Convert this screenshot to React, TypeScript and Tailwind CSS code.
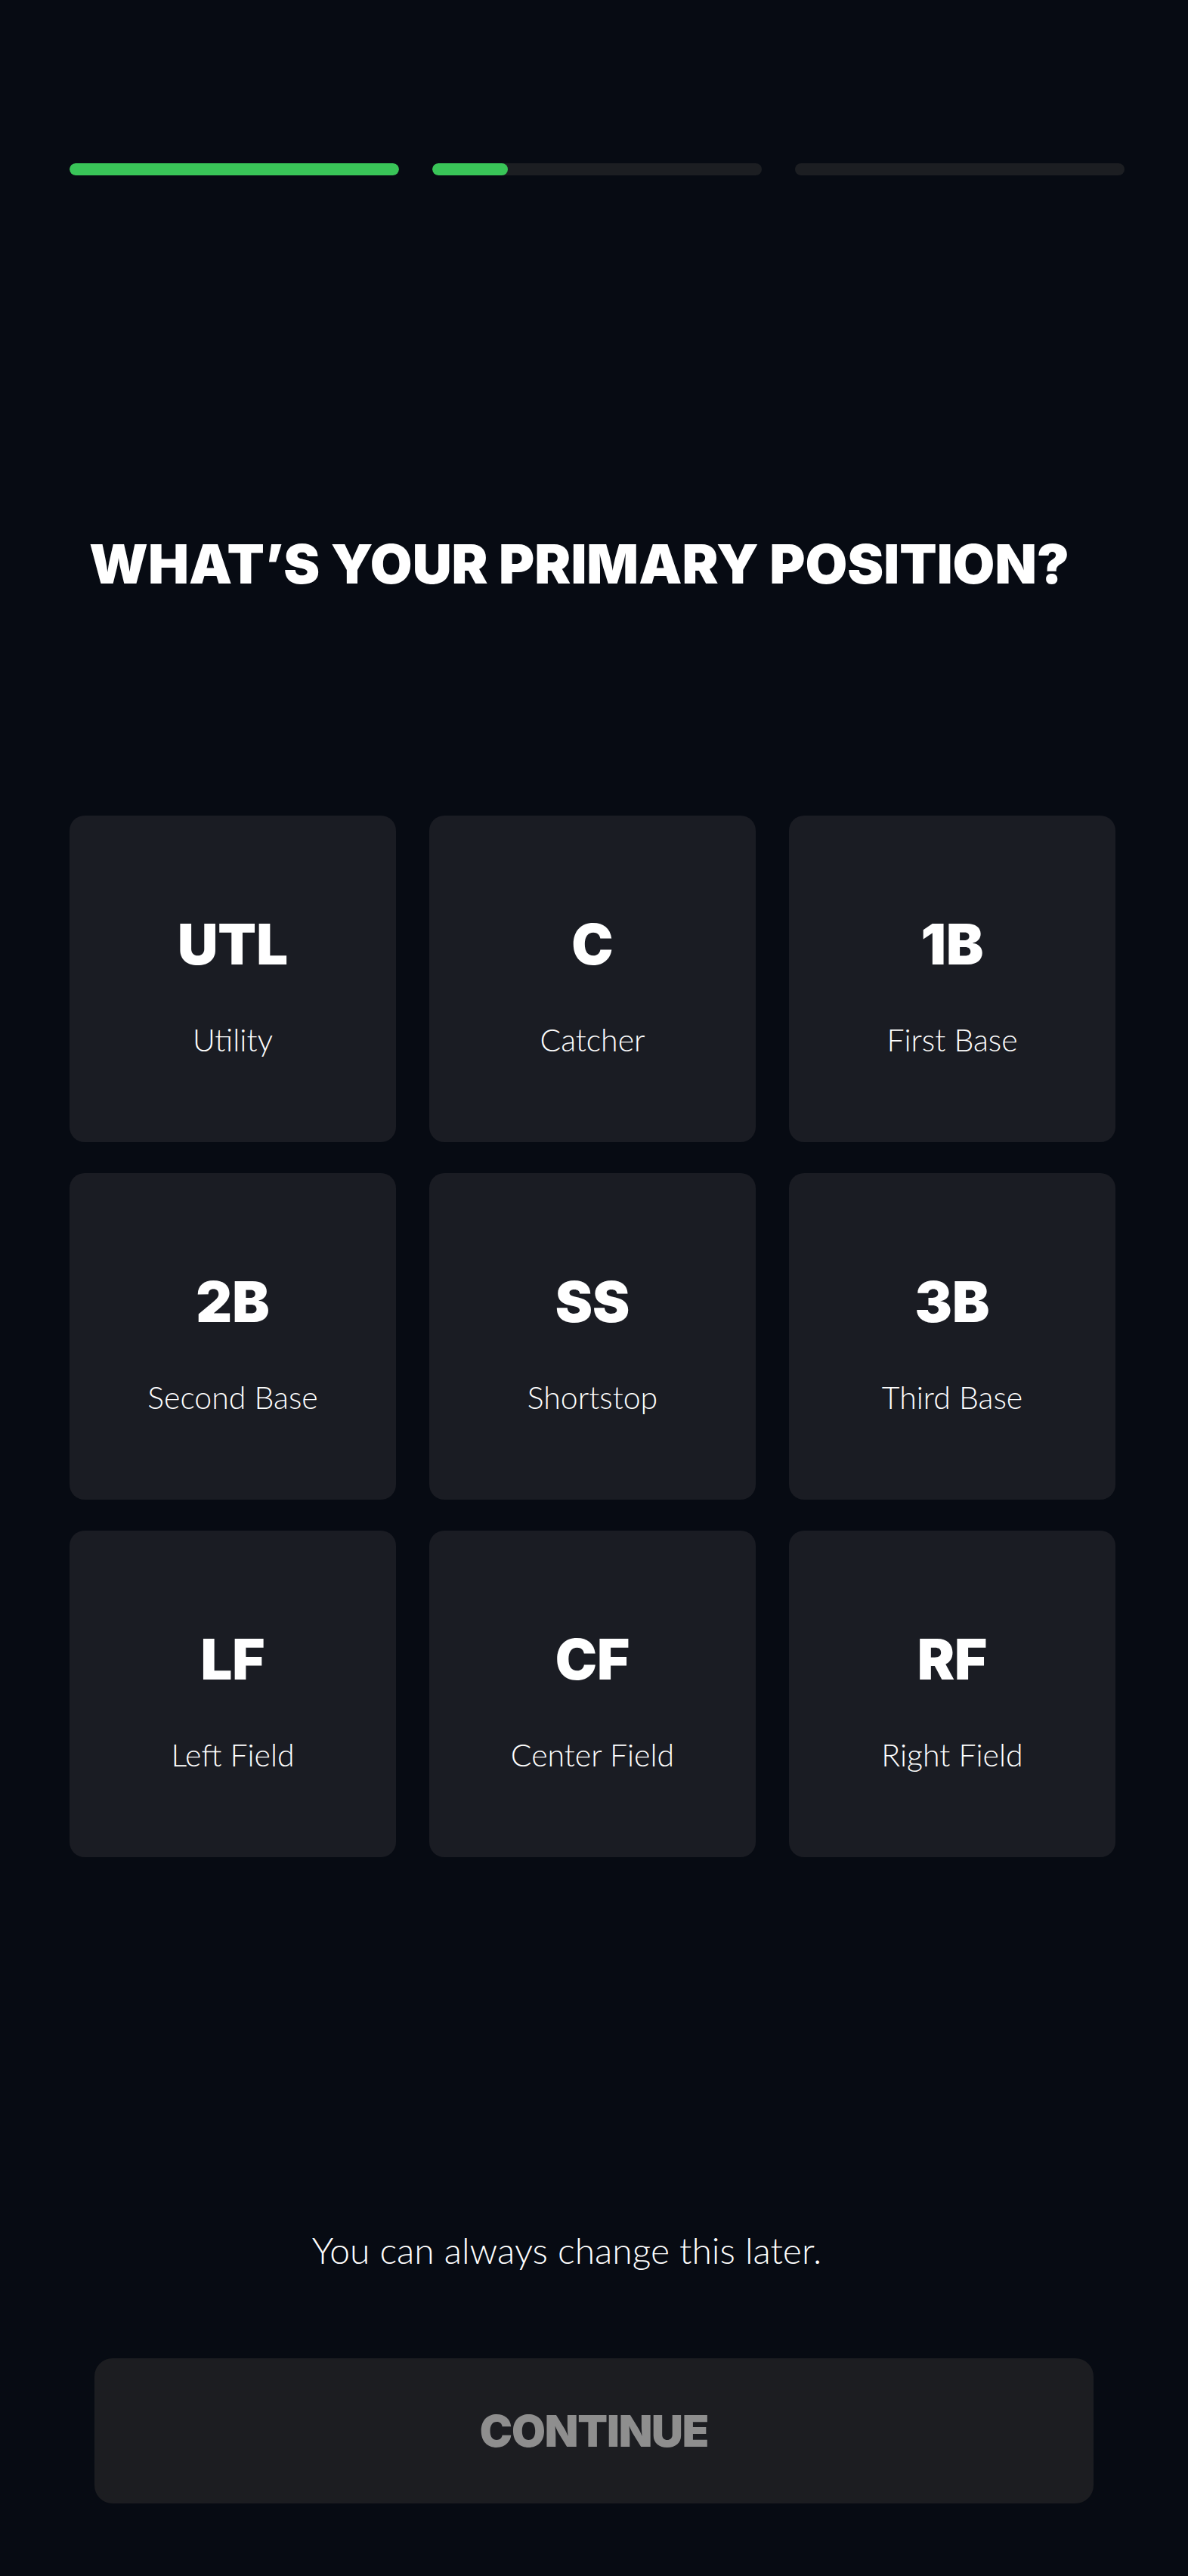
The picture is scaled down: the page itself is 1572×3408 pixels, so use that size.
const positions = [
  { code: "UTL", name: "Utility" },
  { code: "C", name: "Catcher" },
  { code: "1B", name: "First Base" },
  { code: "2B", name: "Second Base" },
  { code: "SS", name: "Shortstop" },
  { code: "3B", name: "Third Base" },
  { code: "LF", name: "Left Field" },
  { code: "CF", name: "Center Field" },
  { code: "RF", name: "Right Field" },
];

function ProgressBar({ value }: { value: number }) {
  return (
    <div className="h-[16px] flex-1 overflow-hidden rounded-full bg-[#1c1e22]">
      <div className="h-full rounded-full bg-[#39c558]" style={{ width: `${value}%` }} />
    </div>
  );
}

function PositionCard({ code, name }: { code: string; name: string }) {
  return (
    <button className="flex aspect-square flex-col items-center rounded-[20px] bg-[#1a1c23] pt-[133px] text-white">
      <span className="font-['Inter',sans-serif] text-[74px] leading-none font-black">{code}</span>
      <span className="mt-[69px] text-[41px] leading-none font-light">{name}</span>
    </button>
  );
}

export default function App() {
  return (
    <div className="flex min-h-[3408px] w-full flex-col bg-[#070b13] font-['Lato',sans-serif] text-white">
      <div className="flex gap-[44px] pt-[216px] pl-[92px] pr-[84px]">
        <ProgressBar value={100} />
        <ProgressBar value={23} />
        <ProgressBar value={0} />
      </div>

      <h1 className="mt-[478px] pl-[118px] font-['Inter',sans-serif] text-[72px] leading-none font-black">
        WHAT’S YOUR PRIMARY POSITION?
      </h1>

      <div className="mt-[297px] grid grid-cols-3 gap-x-[44px] gap-y-[41px] pl-[92px] pr-[96px]">
        {positions.map((p) => (
          <PositionCard key={p.code} code={p.code} name={p.name} />
        ))}
      </div>

      <p className="mt-[496px] pr-[72px] text-center text-[48px] leading-none font-light">
        You can always change this later.
      </p>

      <button className="mx-[125px] mt-[119px] h-[192px] rounded-[24px] bg-[#1c1d21] font-['Inter',sans-serif] text-[58px] leading-none font-black tracking-[-0.02em] text-[#8e8e8e]">
        CONTINUE
      </button>
    </div>
  );
}
